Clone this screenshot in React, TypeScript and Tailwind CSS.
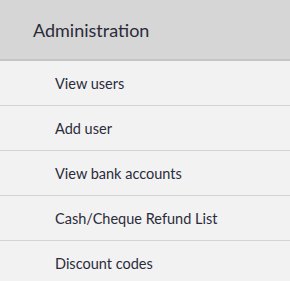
const items = ["View users", "Add user", "View bank accounts", "Cash/Cheque Refund List", "Discount codes"];

export default function App() {
  return (
    <div className="h-[281px] w-[290px] overflow-hidden bg-[#f2f2f2] font-['Lato',sans-serif] text-[#2b2b3a]">
      <div className="flex h-[61px] items-center border-b-2 border-[#c6c6c6] bg-[#d6d6d6] pl-[33px] pt-[2px] text-[18px]">
        Administration
      </div>
      <ul>
        {items.map((item) => (
          <li key={item} className="flex h-[45px] items-center border-b border-[#d4d4d4] pl-[55px] pt-[2px] text-[14.5px]">
            {item}
          </li>
        ))}
      </ul>
    </div>
  );
}
